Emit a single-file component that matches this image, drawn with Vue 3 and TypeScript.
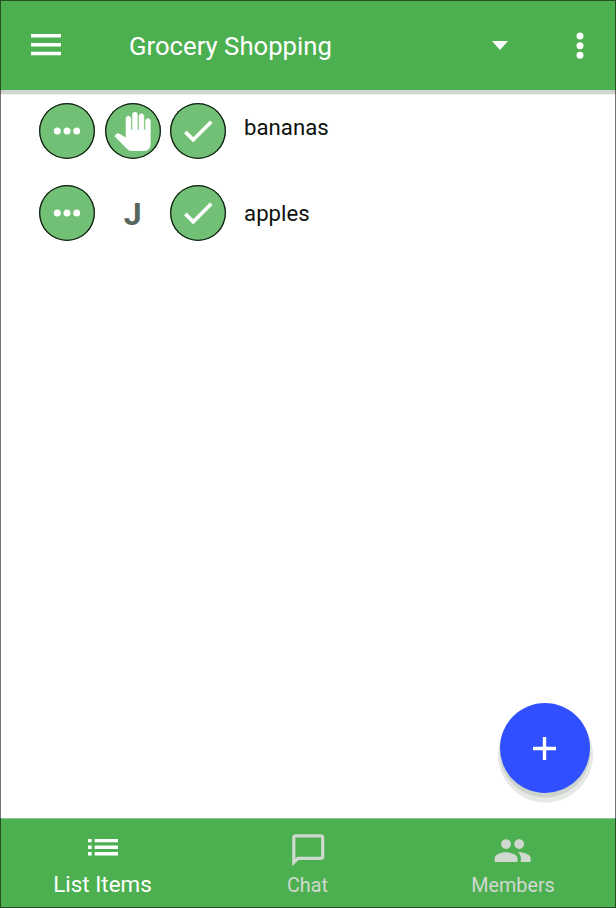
<script setup lang="ts">
import { ref } from 'vue'

interface GroceryItem {
  name: string
  claimedBy?: string
}

interface Tab {
  key: string
  label: string
}

const items: GroceryItem[] = [{ name: 'bananas' }, { name: 'apples', claimedBy: 'J' }]
const tabs: Tab[] = [
  { key: 'items', label: 'List Items' },
  { key: 'chat', label: 'Chat' },
  { key: 'members', label: 'Members' },
]
const activeTab = ref('items')
</script>

<template>
  <div class="app">
    <header class="bar">
      <button class="plain menu" aria-label="Menu">
        <svg width="30" height="22" viewBox="0 0 30 22">
          <path fill="#fff" d="M0 0h30v3.6H0zM0 9h30v3.4H0zM0 17.8h30v3.4H0z" />
        </svg>
      </button>
      <h1 class="title">Grocery Shopping</h1>
      <svg class="caret" width="16" height="9" viewBox="0 0 16 9"><path fill="#fff" d="M0 0h16L8 9z" /></svg>
      <button class="plain more" aria-label="More">
        <svg width="8" height="28" viewBox="0 0 8 28" fill="#fff">
          <circle cx="4" cy="4" r="3.5" /><circle cx="4" cy="13.7" r="3.5" /><circle cx="4" cy="23.3" r="3.5" />
        </svg>
      </button>
    </header>

    <main class="list">
      <div v-for="item in items" :key="item.name" class="row">
        <button class="plain round" aria-label="Options">
          <svg width="28" height="8" viewBox="0 0 28 8" fill="#fff">
            <circle cx="4.3" cy="4" r="3.5" /><circle cx="14" cy="4" r="3.5" /><circle cx="23.7" cy="4" r="3.5" />
          </svg>
        </button>
        <span v-if="item.claimedBy" class="initial">{{ item.claimedBy }}</span>
        <button v-else class="plain round" aria-label="Claim">
          <svg class="hand" width="39" height="39" viewBox="0 0 24 24">
            <path
              fill="#fff"
              stroke="#fff"
              stroke-width="0.3"
              d="M23 5.5V20c0 2.2-1.8 4-4 4h-7.3c-1.08 0-2.1-.43-2.85-1.19L1 14.83s1.26-1.23 1.3-1.25c.22-.19.49-.29.79-.29.22 0 .42.06.6.16.04.01 4.31 2.46 4.31 2.46V4c0-.83.67-1.5 1.5-1.5S11 3.17 11 4v7h1V1.5c0-.83.67-1.5 1.5-1.5S15 .67 15 1.5V11h1V2.5c0-.83.67-1.5 1.5-1.5s1.5.67 1.5 1.5V11h1V5.5c0-.83.67-1.5 1.5-1.5s1.5.67 1.5 1.5z"
            />
          </svg>
        </button>
        <button class="plain round" aria-label="Done">
          <svg width="38" height="38" viewBox="0 0 24 24">
            <path fill="#fff" stroke="#fff" stroke-width="0.45" d="M9 16.17L4.83 12l-1.42 1.41L9 19 21 7l-1.41-1.41z" />
          </svg>
        </button>
        <span class="name">{{ item.name }}</span>
      </div>
    </main>

    <button class="plain fab" aria-label="Add">
      <svg width="23" height="23" viewBox="0 0 23 23">
        <path fill="#fff" d="M9.8 0h3.4v9.8H23v3.4h-9.8V23H9.8v-9.8H0V9.8h9.8z" />
      </svg>
    </button>

    <nav class="tabs">
      <button
        v-for="tab in tabs"
        :key="tab.key"
        class="plain tab"
        :class="{ active: activeTab === tab.key }"
        @click="activeTab = tab.key"
      >
        <span class="icon">
          <svg v-if="tab.key === 'items'" class="lines" width="30" height="17" viewBox="0 0 30 17" fill="currentColor">
            <path d="M0 0h3.7v3.3H0zM6.7 0H30v3.3H6.7zM0 6.6h3.7v3.3H0zM6.7 6.6H30v3.3H6.7zM0 13.1h3.7v3.3H0zM6.7 13.1H30v3.3H6.7z" />
          </svg>
          <svg v-else-if="tab.key === 'chat'" class="bubble" width="38.5" height="38.5" viewBox="0 0 24 24" fill="currentColor">
            <path d="M20 2H4c-1.1 0-2 .9-2 2v18l4-4h14c1.1 0 2-.9 2-2V4c0-1.1-.9-2-2-2zm0 14H5.2L4 17.2V4h16v12z" />
          </svg>
          <svg v-else class="people" width="39.3" height="39.3" viewBox="0 0 24 24" fill="currentColor">
            <path
              d="M16 11c1.66 0 2.99-1.34 2.99-3S17.66 5 16 5c-1.66 0-3 1.34-3 3s1.34 3 3 3zm-8 0c1.66 0 2.99-1.34 2.99-3S9.66 5 8 5C6.34 5 5 6.34 5 8s1.34 3 3 3zm0 2c-2.33 0-7 1.17-7 3.5V19h14v-2.5c0-2.33-4.67-3.5-7-3.5zm8 0c-.29 0-.62.02-.97.05 1.16.84 1.97 1.97 1.97 3.45V19h6v-2.5c0-2.33-4.67-3.5-7-3.5z"
            />
          </svg>
        </span>
        <span class="label">{{ tab.label }}</span>
      </button>
    </nav>
  </div>
</template>

<style>
body {
  margin: 0;
  background: #fff;
}
</style>

<style scoped>
.app {
  position: relative;
  display: flex;
  flex-direction: column;
  height: 908px;
  overflow: hidden;
  font-family: Roboto, 'Liberation Sans', sans-serif;
  background: #fff;
}
.app::after {
  content: '';
  position: absolute;
  inset: 0;
  border: 1px solid rgba(0, 0, 0, 0.55);
  pointer-events: none;
}
.plain {
  border: 0;
  padding: 0;
  margin: 0;
  background: none;
  font: inherit;
}
svg {
  display: block;
  flex: none;
}
.bar {
  display: flex;
  align-items: center;
  height: 90px;
  padding: 1px 32px 0 31px;
  box-sizing: border-box;
  background: #4db050;
  box-shadow: 0 4px 0 #cfd5cf, 0 5px 0 #f0f2f0;
}
.menu {
  margin-bottom: 1px;
}
.title {
  flex: 1;
  margin: 0 0 0 68px;
  font-size: 25.7px;
  font-weight: 400;
  line-height: 32px;
  color: #fff;
}
.caret {
  margin: 0 68px 1px 0;
}
.list {
  flex: 1;
  padding: 13px 0 0 39px;
}
.row {
  display: flex;
  align-items: center;
  gap: 9.7px;
  height: 56px;
  margin-bottom: 25.5px;
}
.round {
  display: flex;
  align-items: center;
  justify-content: center;
  width: 56px;
  height: 56px;
  border-radius: 50%;
  background: #72c075;
  box-shadow: inset 0 0 0 1.3px #101c12;
}
.initial {
  width: 56px;
  text-align: center;
  font-size: 32px;
  line-height: 40px;
  font-weight: 700;
  color: #56665b;
  padding-top: 3px;
}
.name {
  margin: 0 0 9px 8px;
  font-size: 22.2px;
  line-height: 28px;
  color: #0c120d;
}
.row:nth-child(2) .name {
  margin: 0 0 0 8px;
}
.fab {
  position: absolute;
  left: 500px;
  top: 703px;
  display: flex;
  align-items: center;
  justify-content: center;
  box-sizing: border-box;
  width: 90px;
  height: 90px;
  padding: 1px 2px 0 0;
  border-radius: 50%;
  background: #3050ff;
  box-shadow: 0 4px 0 0.5px #cdd5cd, 0.5px 7px 0 2.5px #e7e9e7;
}
.tabs {
  display: grid;
  grid-template-columns: 205px 205px 1fr;
  height: 90px;
  background: #4db050;
  box-shadow: inset 0 1px 0 #8fc392;
}
.tab {
  display: flex;
  flex-direction: column;
  align-items: center;
  color: #d0d9d0;
}
.icon {
  display: flex;
  align-items: center;
  height: 60px;
  margin-top: 2px;
}
.lines {
  margin-top: -5px;
}
.bubble {
  margin-left: 1px;
}
.people {
  margin-top: 1px;
}
.label {
  font-size: 19.8px;
  line-height: 24px;
  margin-top: -6px;
}
.active {
  color: #fff;
}
.active .label {
  font-size: 22.4px;
  margin-top: -8px;
}
</style>
